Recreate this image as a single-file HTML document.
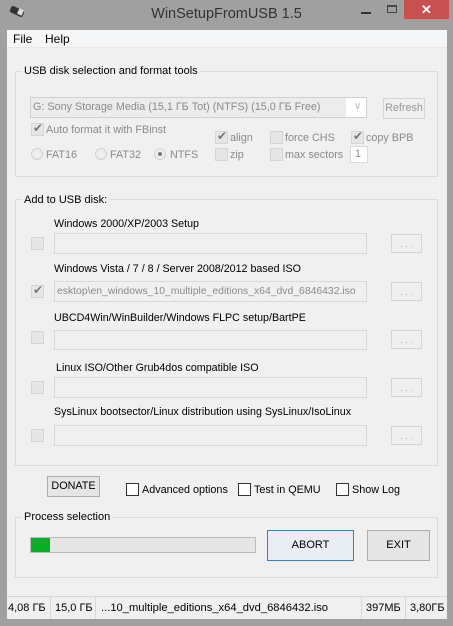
<!DOCTYPE html>
<html><head><meta charset="utf-8"><style>
*{box-sizing:border-box;margin:0;padding:0}
body{width:453px;height:626px;background:#a0a0a0;position:relative;overflow:hidden;font-family:"Liberation Sans",sans-serif;font-size:10.7px;color:#000}
.a{position:absolute;white-space:nowrap}
.client{position:absolute;left:7px;top:30px;width:440px;height:589px;background:#f0f0f0}
.grp{position:absolute;border:1px solid #dcdcdc}
.gt{position:absolute;background:#f0f0f0;padding:0 2px;font-size:11px}
.cb{position:absolute;width:13px;height:13px;border:1px solid #d5d5d5;background:#e6e6e6}
.cb.en{border:1px solid #333;background:#fff}
.tb{position:absolute;border:1px solid #d9d9d9;background:#f0f0f0}
.btn{position:absolute;border:1px solid #d5d5d5;background:#efefef;color:#aaa;text-align:center;font-size:9px}
.bt{position:absolute;border:1px solid #adadad;background:#e5e5e5;text-align:center;font-size:11px}
.dis{color:#8a8a8a}
.rad{position:absolute;width:12px;height:12px;border:1px solid #d0d0d0;border-radius:50%;background:#eee}
.chk{position:absolute;left:1px;top:-3px;font-size:12px;color:#777}
.l{font-size:10.8px}
</style></head><body>
<div class="a" style="left:10px;top:8px;width:14px;height:7px;background:#333;border-radius:2px;transform:rotate(25deg)"></div>
<div class="a" style="left:18px;top:9px;width:5px;height:6px;background:#ddd;transform:rotate(25deg)"></div>
<div class="a" style="left:0;width:453px;top:6px;text-align:center;font-size:14.5px;color:#333">WinSetupFromUSB 1.5</div>
<div class="a" style="left:361px;top:12px;width:10px;height:2px;background:#333"></div>
<div class="a" style="left:387px;top:5px;width:10px;height:8px;border:1px solid #444;border-top-width:2px"></div>
<div class="a" style="left:404px;top:0;width:45px;height:19px;background:#c75050;color:#fff;text-align:center;font-size:13px;line-height:19px;font-weight:bold">✕</div>
<div class="client">
<div class="a" style="left:0;top:0;width:440px;height:18px;background:#f5f6f7;border-bottom:1px solid #e8e8e8"></div>
<div class="a" style="left:6px;top:2px;font-size:12px">File</div>
<div class="a" style="left:38px;top:2px;font-size:12px">Help</div>

<div class="grp" style="left:8px;top:41px;width:423px;height:106px"></div>
<div class="gt" style="left:15px;top:35px">USB disk selection and format tools</div>
<div class="tb" style="left:23px;top:67px;width:337px;height:21px;background:#fff;border-color:#d0d0d0"></div>
<div class="a" style="left:24px;top:68px;width:315px;height:19px;background:#ececec"></div>
<div class="a dis l" style="left:26px;top:71px">G: Sony Storage Media (15,1 ГБ Tot) (NTFS) (15,0 ГБ Free)</div>
<div class="a" style="left:347px;top:71px;color:#bbb;font-size:10px">∨</div>
<div class="btn" style="left:376px;top:68px;width:42px;height:21px;font-size:10.8px;line-height:19px;color:#999">Refresh</div>
<div class="cb" style="left:24px;top:93px"><span class="chk">✔</span></div>
<div class="a dis l" style="left:39px;top:94px">Auto format it with FBinst</div>
<div class="cb" style="left:208px;top:101px"><span class="chk">✔</span></div><div class="a dis l" style="left:223px;top:102px">align</div>
<div class="cb" style="left:263px;top:101px"></div><div class="a dis l" style="left:278px;top:102px">force CHS</div>
<div class="cb" style="left:344px;top:101px"><span class="chk">✔</span></div><div class="a dis l" style="left:359px;top:102px">copy BPB</div>
<div class="cb" style="left:208px;top:118px"></div><div class="a dis l" style="left:223px;top:119px">zip</div>
<div class="cb" style="left:263px;top:118px"></div><div class="a dis l" style="left:278px;top:119px">max sectors</div>
<div class="tb" style="left:343px;top:116px;width:18px;height:17px;background:#fff"></div><div class="a dis l" style="left:348px;top:118px">1</div>
<div class="rad" style="left:24px;top:118px"></div><div class="a dis l" style="left:39px;top:119px">FAT16</div>
<div class="rad" style="left:88px;top:118px"></div><div class="a dis l" style="left:103px;top:119px">FAT32</div>
<div class="rad" style="left:147px;top:118px"><div class="a" style="left:3px;top:3px;width:4px;height:4px;border-radius:50%;background:#777"></div></div><div class="a dis l" style="left:163px;top:119px">NTFS</div>

<div class="grp" style="left:8px;top:169px;width:423px;height:267px"></div>
<div class="gt" style="left:15px;top:164px">Add to USB disk:</div>

<div class="a" style="left:47px;top:188px">Windows 2000/XP/2003 Setup</div>
<div class="cb" style="left:24px;top:207px"></div>
<div class="tb" style="left:47px;top:203px;width:313px;height:21px"></div>
<div class="btn" style="left:384px;top:204px;width:31px;height:19px;line-height:19px">. . .</div>

<div class="a" style="left:47px;top:233px">Windows Vista / 7 / 8 / Server 2008/2012 based ISO</div>
<div class="cb" style="left:24px;top:255px"><span class="chk">✔</span></div>
<div class="tb" style="left:47px;top:251px;width:313px;height:21px;overflow:hidden"><span class="a dis" style="left:2px;top:4px;font-size:10.4px">esktop\en_windows_10_multiple_editions_x64_dvd_6846432.iso</span></div>
<div class="btn" style="left:384px;top:252px;width:31px;height:19px;line-height:19px">. . .</div>

<div class="a" style="left:47px;top:282px">UBCD4Win/WinBuilder/Windows FLPC setup/BartPE</div>
<div class="cb" style="left:24px;top:301px"></div>
<div class="tb" style="left:47px;top:300px;width:313px;height:20px"></div>
<div class="btn" style="left:384px;top:300px;width:31px;height:19px;line-height:19px">. . .</div>

<div class="a" style="left:49px;top:332px">Linux ISO/Other Grub4dos compatible ISO</div>
<div class="cb" style="left:24px;top:351px"></div>
<div class="tb" style="left:47px;top:347px;width:313px;height:21px"></div>
<div class="btn" style="left:384px;top:348px;width:31px;height:19px;line-height:19px">. . .</div>

<div class="a" style="left:47px;top:376px">SysLinux bootsector/Linux distribution using SysLinux/IsoLinux</div>
<div class="cb" style="left:24px;top:399px"></div>
<div class="tb" style="left:47px;top:395px;width:313px;height:21px"></div>
<div class="btn" style="left:384px;top:396px;width:31px;height:19px;line-height:19px">. . .</div>

<div class="bt" style="left:40px;top:446px;width:53px;height:21px;line-height:19px;font-size:10.8px">DONATE</div>
<div class="cb en" style="left:119px;top:453px"></div><div class="a l" style="left:135px;top:454px">Advanced options</div>
<div class="cb en" style="left:231px;top:453px"></div><div class="a l" style="left:247px;top:454px">Test in QEMU</div>
<div class="cb en" style="left:329px;top:453px"></div><div class="a l" style="left:345px;top:454px">Show Log</div>

<div class="grp" style="left:8px;top:487px;width:423px;height:61px"></div>
<div class="gt" style="left:15px;top:481px">Process selection</div>
<div class="a" style="left:23px;top:507px;width:226px;height:16px;border:1px solid #bcbcbc;background:#e6e6e6"><div class="a" style="left:0;top:0;width:19px;height:14px;background:#06b025"></div></div>
<div class="bt" style="left:260px;top:500px;width:87px;height:31px;line-height:29px;border-color:#3c7fb1;background:#e8eef4">ABORT</div>
<div class="bt" style="left:360px;top:500px;width:63px;height:31px;line-height:29px">EXIT</div>

<div class="a" style="left:0;top:566px;width:440px;height:23px;border-top:1px solid #d7d7d7;background:#f0f0f0"></div>
<div class="a" style="left:43px;top:567px;width:1px;height:22px;background:#d7d7d7"></div>
<div class="a" style="left:88px;top:567px;width:1px;height:22px;background:#d7d7d7"></div>
<div class="a" style="left:354px;top:567px;width:1px;height:22px;background:#d7d7d7"></div>
<div class="a" style="left:398px;top:567px;width:1px;height:22px;background:#d7d7d7"></div>
<div class="a" style="left:1px;top:572px;font-size:11px">4,08 ГБ</div>
<div class="a" style="left:48px;top:572px;font-size:11px">15,0 ГБ</div>
<div class="a" style="left:94px;top:572px;font-size:11.2px">...10_multiple_editions_x64_dvd_6846432.iso</div>
<div class="a" style="left:359px;top:572px;font-size:11px">397МБ</div>
<div class="a" style="left:403px;top:572px;font-size:11px">3,80ГБ</div>
</div>
</body></html>
